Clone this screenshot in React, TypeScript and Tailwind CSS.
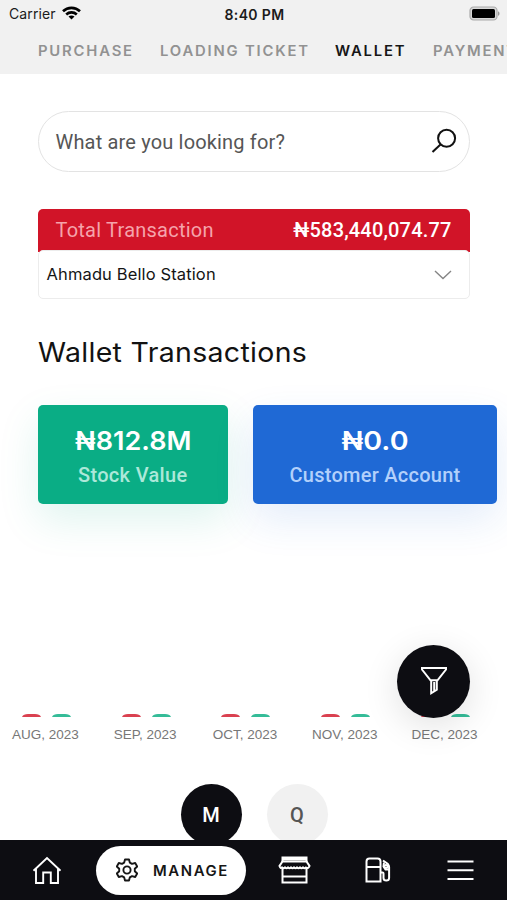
import React from "react";

const tabs = [
  { label: "PURCHASE", cls: "w-[122px] text-[#929292]" },
  { label: "LOADING TICKET", cls: "w-[175px] text-[#929292]" },
  { label: "WALLET", cls: "w-[98px] text-[#161616]" },
  { label: "PAYMENT", cls: "text-[#929292]" },
];

const months = ["AUG, 2023", "SEP, 2023", "OCT, 2023", "NOV, 2023", "DEC, 2023"];

function StatusBar() {
  return (
    <div className="flex h-[28px] items-center justify-between pr-[7px] pl-[9px] font-['Inter',sans-serif] text-[#1b1b1b]">
      <div className="-mt-[2px] flex w-[100px] items-center gap-[6px] text-[14px] tracking-[0.1px]">
        <span className="pt-[1px]">Carrier</span>
        <svg width="19" height="14" viewBox="0 0 19 14" fill="none" stroke="#000" strokeWidth="2.6">
          <path d="M1 5.3C5.7.7 13.3.7 18 5.3" />
          <path d="M4.2 8.5c3-2.8 7.6-2.8 10.6 0" />
          <path d="M9.5 13.5 6.5 10.6c1.7-1.5 4.3-1.5 6 0Z" fill="#000" stroke="none" />
        </svg>
      </div>
      <div className="text-[14px] font-semibold tracking-[0.35px]">8:40 PM</div>
      <div className="-mt-[2px] flex w-[100px] justify-end">
        <svg width="31" height="15" viewBox="0 0 31 15">
          <rect x="1" y="1" width="27" height="13" rx="3.6" fill="#d8d8d8" stroke="#aaa" strokeWidth="1.2" />
          <rect x="3" y="3" width="23" height="9" rx="1.5" fill="#000" />
          <path d="M29 5.2c2 .8 2 3.8 0 4.6Z" fill="#999" />
        </svg>
      </div>
    </div>
  );
}

function Bar({ color }: { color: string }) {
  return (
    <svg width="19" height="3" viewBox="0 0 19 3">
      <path d="M0 3C1 .8 3 0 6 0h7c3 0 5 .8 6 3Z" fill={color} />
    </svg>
  );
}

export default function App() {
  return (
    <div className="relative flex h-[900px] w-full flex-col overflow-hidden bg-white font-['Roboto',sans-serif]">
      <header className="h-[74px] shrink-0 overflow-hidden bg-[#f1f1f1]">
        <StatusBar />
        <nav className="flex h-[44px] items-center pl-[38px] font-['Inter',sans-serif] text-[14px] font-semibold tracking-[1.7px] whitespace-nowrap">
          {tabs.map((t) => (
            <div key={t.label} className={`shrink-0 ${t.cls}`}>
              <span className="inline-block origin-left scale-x-[1.06]">{t.label}</span>
            </div>
          ))}
        </nav>
      </header>

      <main className="flex h-[766px] shrink-0 flex-col overflow-hidden">
        <div className="mx-[37.5px] mt-[37px] flex h-[61px] shrink-0 items-center justify-between rounded-full border-[1.5px] border-[#e3e3e3] pr-[12px] pl-[17px]">
          <span className="text-[20px] tracking-[0.17px] text-[#565656]">What are you looking for?</span>
          <svg className="-mt-[2px]" width="26" height="26" viewBox="0 0 26 26" fill="none" stroke="#111" strokeWidth="2">
            <circle cx="15.6" cy="10.2" r="8.5" />
            <path d="M9.5 16.5 1.5 24" />
          </svg>
        </div>

        <section className="mx-[37.5px] mt-[37px] h-[90px] shrink-0 rounded-[5px] bg-[linear-gradient(#d11428_43px,#fff_43px)]">
          <div className="flex h-[41px] items-center justify-between px-[18px] pt-[1px] text-[20px]">
            <span className="tracking-[0.23px] text-[#f5a3ab]">Total Transaction</span>
            <span className="font-medium tracking-[0.17px] text-white">₦583,440,074.77</span>
          </div>
          <div className="flex h-[49px] items-center justify-between rounded-[5px] border border-[#ececec] bg-white pr-[17px] pl-[8px]">
            <span className="font-['Inter',sans-serif] text-[16.5px] tracking-[0.13px] text-[#151515]">Ahmadu Bello Station</span>
            <svg width="18" height="10" viewBox="0 0 18 10" fill="none" stroke="#858585" strokeWidth="1.4">
              <path d="m1 1 8 7.5L17 1" />
            </svg>
          </div>
        </section>

        <h1 className="mt-[34px] ml-[38px] h-[40px] w-max origin-left scale-x-[1.055] font-['Inter',sans-serif] text-[27px] leading-[40px] tracking-[0.3px] text-[#121212]">
          Wallet Transactions
        </h1>

        <section className="mt-[32px] flex h-[99px] shrink-0 gap-[25px] pl-[37.5px] text-center">
          <div className="h-[99px] w-[190.5px] shrink-0 rounded-[5px] bg-[#0aad85] pt-[18px] shadow-[0_16px_40px_rgba(10,173,133,0.13)]">
            <div className="scale-x-[1.04] font-['Inter',sans-serif] text-[26px] leading-[35px] font-semibold text-white">₦812.8M</div>
            <div className="text-[20px] leading-[34px] font-medium tracking-[0.33px] text-[#ace8d9]">Stock Value</div>
          </div>
          <div className="h-[99px] w-[244px] shrink-0 rounded-[5px] bg-[#1f69d5] pt-[18px] shadow-[0_16px_40px_rgba(31,105,213,0.12)]">
            <div className="scale-x-[1.1] font-['Inter',sans-serif] text-[26px] leading-[35px] font-semibold text-white">₦0.0</div>
            <div className="text-[20px] leading-[34px] font-medium tracking-[0.26px] text-[#b2d0fb]">Customer Account</div>
          </div>
        </section>

        <section className="mt-[210px] -ml-[4.5px] flex shrink-0">
          {months.map((m) => (
            <div key={m} className="flex w-[99.8px] shrink-0 flex-col items-center">
              <div className="ml-[2px] flex h-[3px] gap-[11px]">
                <Bar color="#da4150" />
                <Bar color="#35bc98" />
              </div>
              <div className="mt-[9px] font-['Liberation_Sans',sans-serif] text-[13.5px] leading-[18px] text-[#777]">{m}</div>
            </div>
          ))}
        </section>

        <section className="mt-[40px] flex shrink-0 gap-[25px] pl-[180.5px] text-[20px] font-medium">
          <div className="flex size-[61px] items-center justify-center rounded-full bg-[#0d0d12] text-white">M</div>
          <div className="flex size-[61px] items-center justify-center rounded-full bg-[#f1f1f1] text-[#565656]">Q</div>
        </section>
      </main>

      <button className="absolute top-[644.5px] left-[397px] flex size-[73px] items-center justify-center rounded-full bg-[#0d0d12] shadow-[0_8px_36px_rgba(0,0,0,0.12)]">
        <svg width="28" height="30" viewBox="0 0 28 30" fill="none" stroke="#fff" strokeWidth="2">
          <path d="M2 2h24v1.500L17.500 14.300H10.500L2 3.500Z" />
          <path d="M11.200 14.300v13l5.600-3.500v-9.500M14.200 16v9" />
        </svg>
      </button>

      <nav className="flex h-[60px] shrink-0 items-center bg-[#0d0d12]">
        <div className="flex w-[96px] justify-center pr-[2px]">
          <svg width="30" height="28" viewBox="0 0 30 28" fill="none" stroke="#fff" strokeWidth="1.9">
            <path d="M1.500 14.800 15 2l13.500 12.800M4 13v14h7.200V16.500h7.600V27H26V13" />
          </svg>
        </div>
        <div className="flex h-[49px] w-[150px] shrink-0 items-center rounded-full bg-white pl-[20px]">
          <svg className="shrink-0" width="22" height="24" viewBox="0 0 22 24" fill="none" stroke="#161616" strokeWidth="1.9" strokeLinejoin="round">
            <path d="M9 1.500h4l.8 3.100 2.200 1.300 3.200-.9 2 3.500-2.400 2.300v2.400l2.400 2.300-2 3.500-3.200-.9-2.200 1.300-.8 3.100H9l-.8-3.100L6 18.100l-3.200.9-2-3.500 2.400-2.300v-2.400L.8 8.500l2-3.500 3.200.9 2.200-1.300Z" />
            <circle cx="11" cy="12" r="3.600" />
          </svg>
          <span className="ml-[15px] origin-left scale-x-[1.065] font-['Inter',sans-serif] text-[14px] font-semibold tracking-[1.5px] text-[#161616]">MANAGE</span>
        </div>
        <div className="flex w-[97px] justify-center">
          <svg width="33" height="28" viewBox="0 0 33 28" fill="none" stroke="#fff" strokeWidth="2">
            <path d="M4.500 6V1.500h24V6M5 3.500h23" />
            <path d="M4.500 5.500h24l3 4.500q-1 3-3.500 1.500-1.500 1.500-3 0-1.500 1.500-3 0-1.500 1.500-3 0-1.500 1.500-3 0-1.500 1.500-3 0-1.500 1.500-3 0-1.500 1.500-3 0-1.500 1.500-3 0Q2.500 13 1.500 10Z" />
            <path d="M4.500 11v15.500h24V11M5 20.500h23" />
          </svg>
        </div>
        <div className="flex w-[69px] justify-center">
          <svg width="26" height="26" viewBox="0 0 26 26" fill="none" stroke="#fff" strokeWidth="2">
            <path d="M1.500 24.500V4.500q0-3 3-3h8q3 0 3 3v20ZM1.500 10H15.500M15.500 15.500h2q1 0 1 1v4.500q0 2.500 2.800 2.500t2.800-2.500V10q0-1.500-1.200-3L18 3.500" />
            <path d="M19 5.500l-.5 4 2 3h3.500" />
            <circle cx="21" cy="9.500" r="1.500" />
          </svg>
        </div>
        <div className="flex w-[95px] justify-center pl-[2px]">
          <svg width="27" height="22" viewBox="0 0 27 22" stroke="#fff" strokeWidth="1.9">
            <path d="M.5 2.500h26M.5 11.200h26M.5 20h26" />
          </svg>
        </div>
      </nav>
    </div>
  );
}
